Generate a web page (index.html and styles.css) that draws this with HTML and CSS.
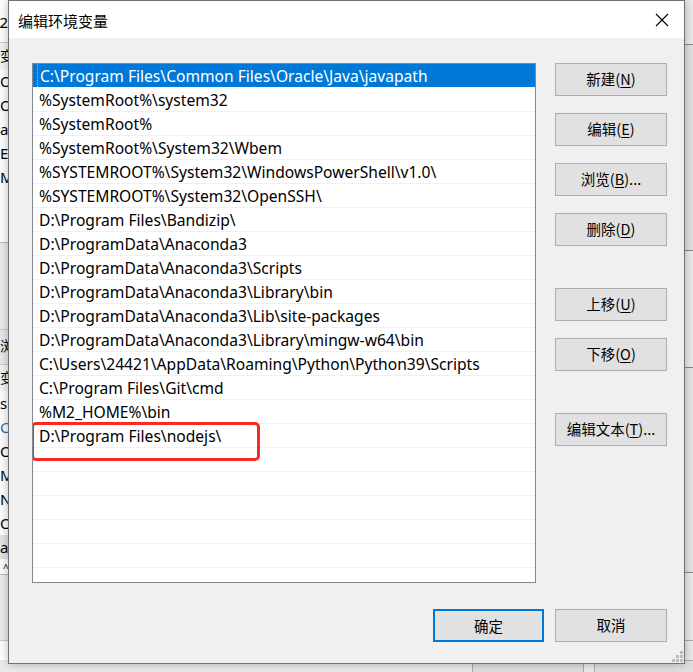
FILE: index.html
```html
<!DOCTYPE html>
<html lang="zh-CN">
<head>
<meta charset="utf-8">
<title>编辑环境变量</title>
<link rel="stylesheet" href="styles.css">
</head>
<body>
<div class="desktop">
  <div class="bg-left">
    <div class="bl bl-top">42</div>
    <div class="bl bl-head">变量</div>
    <div class="bl">Or</div>
    <div class="bl">Or</div>
    <div class="bl">a</div>
    <div class="bl">E</div>
    <div class="bl">M</div>
    <div class="bl-blank"></div>
    <div class="bl-gap1"></div>
    <div class="bl bl-head2">浏览</div>
    <div class="bl bl-head">变量</div>
    <div class="bl">sl</div>
    <div class="bl bl-blue">Co</div>
    <div class="bl">Or</div>
    <div class="bl">M2</div>
    <div class="bl">NU</div>
    <div class="bl">OS</div>
    <div class="bl bl-sel">a</div>
    <div class="bl bl-caret">^</div>
    <div class="bl-gap2"></div>
  </div>
  <div class="bg-right">
    <div class="br br1"></div>
    <div class="br br2"></div>
    <div class="br br3"></div>
    <div class="br br4"></div>
    <div class="br br5"></div>
  </div>
  <div class="bg-bottom">
    <div class="bgbtn"></div>
    <div class="bgbtn"></div>
  </div>

  <div class="dialog">
    <div class="titlebar">
      <span class="title">编辑环境变量</span>
      <svg class="close" width="14" height="14" viewBox="0 0 14 14"><path d="M1 1 L13 13 M13 1 L1 13" stroke="#000" stroke-width="1.1" fill="none"/></svg>
    </div>
    <div class="client">
      <div class="main">
        <div class="list">
          <div class="row sel"><span class="focus">C:\Program Files\Common Files\Oracle\Java\javapath</span></div>
          <div class="row">%SystemRoot%\system32</div>
          <div class="row">%SystemRoot%</div>
          <div class="row">%SystemRoot%\System32\Wbem</div>
          <div class="row">%SYSTEMROOT%\System32\WindowsPowerShell\v1.0\</div>
          <div class="row">%SYSTEMROOT%\System32\OpenSSH\</div>
          <div class="row">D:\Program Files\Bandizip\</div>
          <div class="row">D:\ProgramData\Anaconda3</div>
          <div class="row">D:\ProgramData\Anaconda3\Scripts</div>
          <div class="row">D:\ProgramData\Anaconda3\Library\bin</div>
          <div class="row">D:\ProgramData\Anaconda3\Lib\site-packages</div>
          <div class="row">D:\ProgramData\Anaconda3\Library\mingw-w64\bin</div>
          <div class="row">C:\Users\24421\AppData\Roaming\Python\Python39\Scripts</div>
          <div class="row">C:\Program Files\Git\cmd</div>
          <div class="row">%M2_HOME%\bin</div>
          <div class="row">D:\Program Files\nodejs\</div>
          <div class="row"></div>
          <div class="row"></div>
          <div class="row"></div>
          <div class="row"></div>
          <div class="row"></div>
          <div class="row"></div>
          <div class="mark"></div>
        </div>
        <div class="side">
          <div class="group">
            <button class="btn">新建(<u>N</u>)</button>
            <button class="btn">编辑(<u>E</u>)</button>
            <button class="btn">浏览(<u>B</u>)...</button>
            <button class="btn">删除(<u>D</u>)</button>
          </div>
          <div class="group">
            <button class="btn">上移(<u>U</u>)</button>
            <button class="btn">下移(<u>O</u>)</button>
          </div>
          <div class="group">
            <button class="btn">编辑文本(<u>T</u>)...</button>
          </div>
        </div>
      </div>
      <div class="footer">
        <button class="btn default">确定</button>
        <button class="btn">取消</button>
      </div>
      <div class="grip">
        <i></i><i></i><i></i><i></i><i></i><i></i>
      </div>
    </div>
  </div>
</div>
</body>
</html>
```

FILE: styles.css
```css
* { box-sizing: border-box; }
html, body { margin: 0; padding: 0; }
body {
  width: 693px;
  height: 672px;
  overflow: hidden;
  background: #e9e9e9;
  font-family: "Noto Sans", "Noto Sans CJK SC", sans-serif;
}
.desktop {
  position: relative;
  width: 693px;
  height: 672px;
  overflow: hidden;
}

/* background window fragments */
.bg-left {
  position: absolute;
  left: 0; top: 0;
  width: 12px; height: 672px;
  overflow: hidden;
  background: #fff;
  font-size: 15px;
  color: #000;
}
.bl {
  height: 24px;
  line-height: 24px;
  white-space: nowrap;
}
.bl-top {
  height: 43px;
  line-height: 44px;
  margin-left: -9px;
  border-bottom: 1px solid #ccc;
}
.bl-head { background: #f5f5f5; height: 26px; line-height: 26px; font-size: 14px; }
.bl-blank { height: 53px; }
.bl-gap1 { height: 88px; border-top: 1px solid #bbb; border-bottom: 1px solid #ccc; background: #ececec; }
.bl-head2 { background: #eaeaea; height: 35px; line-height: 32px; border-bottom: 1px solid #ccc; font-size: 14px; }
.bl-blue { color: #2a6db5; }
.bl-sel { background: #e5e5e5; }
.bl-caret { height: 16px; line-height: 18px; font-size: 10px; padding-left: 3px; border-bottom: 1px solid #bbb; }
.bl-gap2 { height: 66px; border-bottom: 1px solid #ccc; background: #ececec; }

.bg-right {
  position: absolute;
  right: 0; top: 0;
  width: 12px; height: 672px;
  background: #ececec;
}
.br { position: absolute; left: 0; right: 0; }
.br1 { top: 44px; height: 1px; background: #888; }
.br2 { top: 45px; height: 205px; background: #e3e3e3; }
.br3 { top: 250px; height: 1px; background: #888; }
.br4 { top: 367px; height: 206px; border-top: 1px solid #888; border-bottom: 1px solid #888; background: #e6e6e6; }
.br5 { top: 640px; height: 1px; background: #aaa; }

.bg-bottom {
  position: absolute;
  left: 0; right: 0; bottom: 0;
  height: 12px;
  display: flex;
  padding-left: 472px;
  gap: 10px;
  background: #ececec;
}
.bgbtn {
  width: 112px;
  height: 20px;
  background: #e1e1e1;
  border: 1px solid #adadad;
  flex: none;
}

/* dialog window */
.dialog {
  position: absolute;
  left: 8px; top: 0;
  width: 677px;
  height: 664px;
  border: 1px solid #707070;
  background: #f0f0f0;
  box-shadow: 0 0 10px rgba(0,0,0,0.28);
  display: flex;
  flex-direction: column;
}
.titlebar {
  height: 37px;
  flex: none;
  background: #fff;
  display: flex;
  align-items: center;
  justify-content: space-between;
  padding-left: 9px;
  padding-right: 15px;
}
.title {
  font-family: "Noto Sans CJK SC", sans-serif;
  font-size: 15px;
  color: #000;
  position: relative;
  top: 1px;
}
.close { display: block; }

.client {
  position: relative;
  flex: 1;
  padding: 25px 17px 0 23px;
  display: flex;
  flex-direction: column;
}
.main {
  display: flex;
  gap: 19px;
}
.list {
  position: relative;
  width: 504px;
  height: 520px;
  border: 1px solid #828790;
  background: #fff;
  overflow: hidden;
  flex: none;
}
.row {
  height: 24px;
  padding-top: 2px;
  line-height: 21px;
  border-bottom: 1px solid #f0f0f0;
  padding-left: 6px;
  font-size: 15.6px;
  color: #000;
  white-space: nowrap;
}
.row.sel {
  background: #0078d7;
  color: #fff;
  border-bottom-color: #fff;
  padding-left: 4px;
  padding-top: 0;
}
.focus {
  display: inline-block;
  height: 23px;
  line-height: 25px;
  padding-left: 2px;
  border-left: 1px dotted #e8a85a;
}
.mark {
  position: absolute;
  left: -2px;
  top: 358px;
  width: 229px;
  height: 39px;
  border: 3px solid #fa2a20;
  border-radius: 5px;
}

.side {
  display: flex;
  flex-direction: column;
  gap: 42px;
  width: 112px;
  flex: none;
}
.group {
  display: flex;
  flex-direction: column;
  gap: 17px;
}
.btn {
  width: 112px;
  height: 33px;
  padding: 0 0 2px;
  margin: 0;
  background: #e1e1e1;
  border: 1px solid #adadad;
  border-radius: 0;
  font-family: "Noto Sans CJK SC", sans-serif;
  font-size: 14.5px;
  color: #000;
  line-height: 29px;
  text-align: center;
}
.btn u { text-decoration-thickness: 1px; text-underline-offset: 2px; }
.btn.default {
  border: 2px solid #0078d7;
  width: 111px;
}
.footer {
  display: flex;
  justify-content: flex-end;
  gap: 11px;
  margin-top: 26px;
}

.grip {
  position: absolute;
  right: 1px;
  bottom: 1px;
  width: 12px;
  height: 12px;
}
.grip i {
  position: absolute;
  width: 3px;
  height: 3px;
  background: #bcbcbc;
}
.grip i:nth-child(1) { right: 0; bottom: 0; }
.grip i:nth-child(2) { right: 4px; bottom: 0; }
.grip i:nth-child(3) { right: 8px; bottom: 0; }
.grip i:nth-child(4) { right: 0; bottom: 4px; }
.grip i:nth-child(5) { right: 4px; bottom: 4px; }
.grip i:nth-child(6) { right: 0; bottom: 8px; }
```
